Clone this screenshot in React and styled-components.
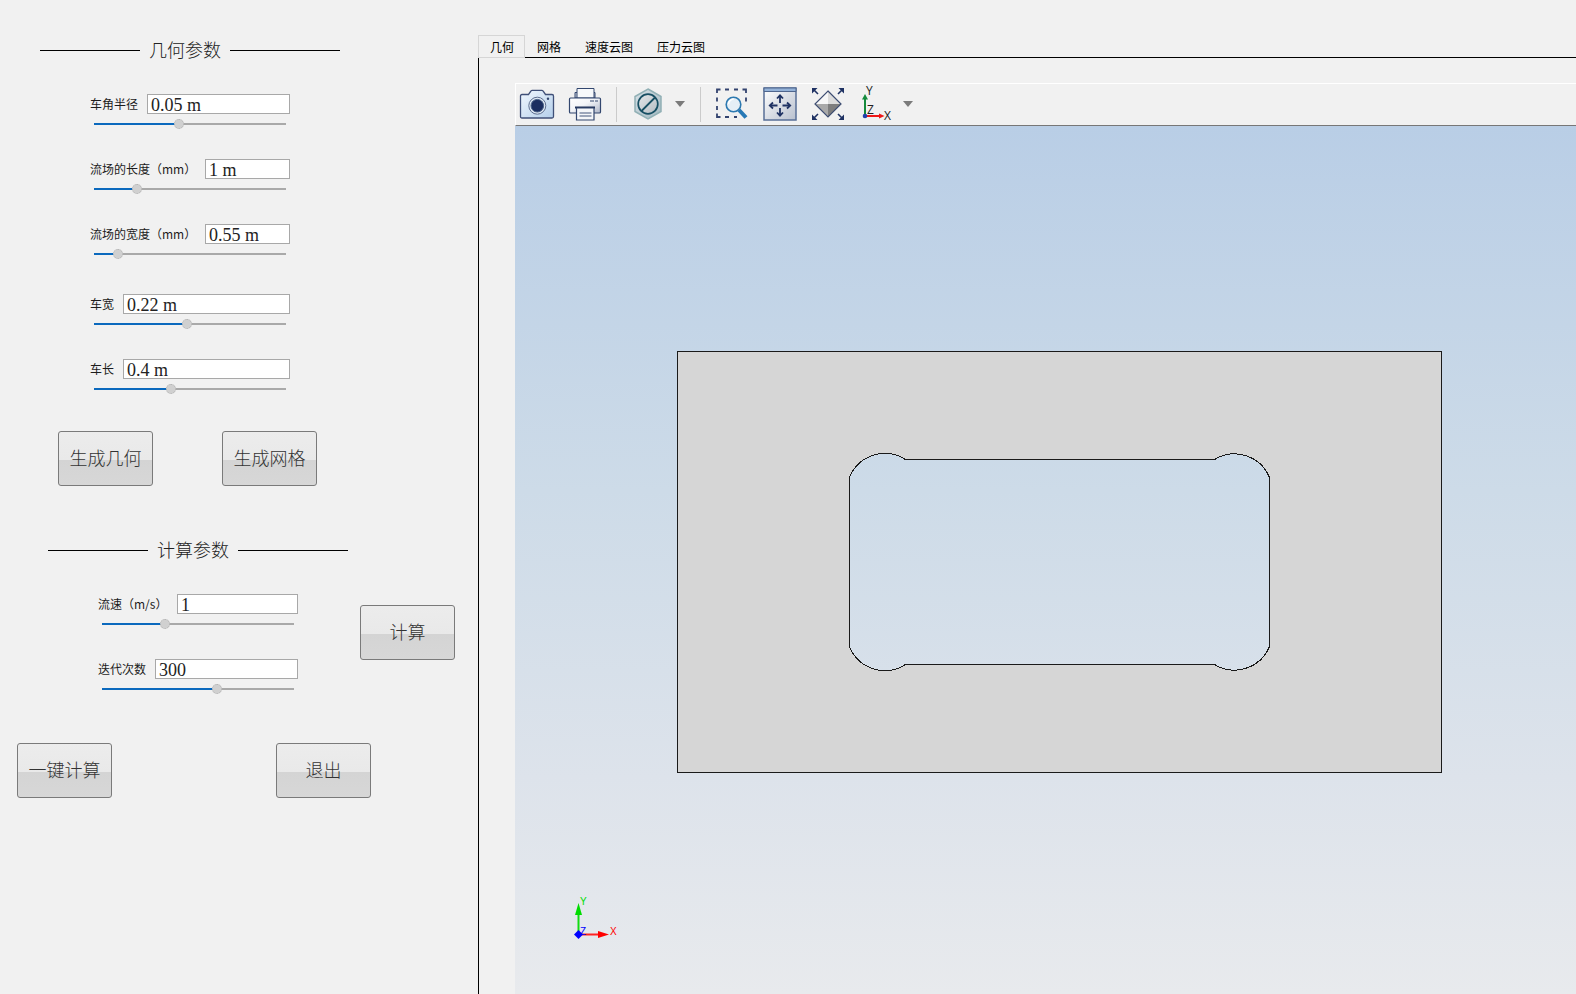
import React, { useId, useState } from "react";
import styled, { createGlobalStyle, css } from "styled-components";

const sans = `"Noto Sans CJK SC", "Noto Sans", sans-serif`;

const GlobalStyle = createGlobalStyle`
  *, *::before, *::after { box-sizing: border-box; }
  body {
    margin: 0;
    background: #f1f1f1;
    color: #1c1c1c;
    font-family: ${sans};
    font-size: 12px;
    line-height: 20px;
  }
`;

const Window = styled.div`
  display: flex;
  min-height: 100vh;
`;

/* ---------- left side: parameters ---------- */

const Sidebar = styled.aside`
  flex: none;
  width: 478px;
  padding-top: 40px;
`;

const SectionTitle = styled.h2`
  display: flex;
  align-items: center;
  gap: 9px;
  width: 300px;
  height: 20px;
  margin: 0 0 34px ${(p) => p.$indent}px;
  font-size: 18px;
  font-weight: 300;
  color: #222;
  white-space: nowrap;

  &::before, &::after {
    content: "";
    height: 1px;
    background: #000;
  }
  &::before { width: 100px; }
  &::after { flex: 1; }
`;

const TitleText = styled.span`
  padding-bottom: 3px;
`;

const Fields = styled.div`
  display: flex;
  flex-direction: column;
  gap: 30px;
  width: 200px;
`;

const GeometryFields = styled.div`
  display: flex;
  flex-direction: column;
  gap: 35px;
  margin-left: 90px;
`;

const Field = styled.div`
  display: flex;
  flex-direction: column;
  gap: 5px;
`;

const FieldRow = styled.div`
  display: flex;
  gap: 9px;
  height: 20px;
`;

const Label = styled.label`
  flex: none;
  width: ${(p) => p.$width}px;
  white-space: nowrap;
`;

const TextBox = styled.input`
  flex: 1;
  min-width: 0;
  height: 20px;
  padding: 2px 3px 0;
  border: 1px solid #a8a8a8;
  border-radius: 0;
  background: #fff;
  color: #222;
  font: 18px/16px "Liberation Serif", "Noto Sans CJK SC", serif;
  outline: none;
`;

const thumb = css`
  width: 10px;
  height: 10px;
  border: 1px dotted #b0b0b0;
  border-radius: 50%;
  background: #d0d0d0;
`;

const Slider = styled.input`
  appearance: none;
  width: 192px;
  height: 10px;
  margin: 0 4px;
  background: linear-gradient(#0b69bd, #0b69bd) 0 4px / ${(p) => p.value}% 2px no-repeat,
    linear-gradient(#a9a9a9, #a9a9a9) 0 4px / 100% 2px no-repeat;

  &::-webkit-slider-thumb { appearance: none; ${thumb} }
  &::-moz-range-thumb { ${thumb} }
`;

const ButtonRow = styled.div`
  display: flex;
  gap: ${(p) => p.$gap}px;
  margin: ${(p) => p.$top}px 0 0 ${(p) => p.$indent}px;
`;

const PushButton = styled.button`
  flex: none;
  width: 95px;
  height: 55px;
  padding: 0 0 3px;
  border: 1px solid #7a7a7a;
  border-radius: 3px;
  background: linear-gradient(#ececec 0, #e9e9e9 28px, #d4d4d4 28px, #d7d7d7 100%);
  color: #333;
  font: 300 18px/24px ${sans};
`;

const ComputeSection = styled.section`
  margin-top: 54px;
`;

const ComputeArea = styled.div`
  display: flex;
  align-items: flex-start;
  gap: 62px;
  margin-left: 98px;

  ${PushButton} { margin-top: 11px; }
`;

/* ---------- right side: tabs and viewer ---------- */

const Workspace = styled.main`
  flex: 1;
  min-width: 0;
  display: flex;
  flex-direction: column;
  padding-top: 35px;
`;

const TabList = styled.div`
  display: flex;
  height: 23px;

  &::after {
    content: "";
    flex: 1;
    border-bottom: 1px solid #000;
  }
`;

const Tab = styled.button`
  padding: 1px 12px 0;
  border: 0;
  border-bottom: 1px solid #000;
  background: none;
  color: #000;
  font: 12px/20px ${sans};
  white-space: nowrap;

  &[aria-selected="true"] {
    padding: 0 10px 0 11px;
    border: 1px solid #d6d6d6;
  }
`;

const TabPanel = styled.div`
  flex: 1;
  display: flex;
  flex-direction: column;
  padding: 25px 0 0 36px;
  border-left: 1px solid #000;
`;

const Toolbar = styled.div`
  display: flex;
  align-items: center;
  gap: 14px;
  height: 43px;
  padding: 0 0 1px 4px;
  border-top: 1px solid #fff;
  border-left: 1px solid #fff;
  border-bottom: 1px solid #777;
`;

const ToolGroup = styled.div`
  display: flex;
  align-items: center;
  gap: 9px;
`;

const ToolButton = styled.button`
  flex: none;
  display: flex;
  align-items: center;
  justify-content: center;
  width: ${(p) => (p.$menu ? 12 : 34)}px;
  height: 34px;
  padding: 0;
  border: 0;
  background: none;

  svg { display: block; flex: none; overflow: visible; }
`;

const Separator = styled.span`
  width: 1px;
  height: 35px;
  background: #cbcbcb;
`;

const Viewport = styled.div`
  flex: 1;
  display: flex;
  min-height: 0;
  background: linear-gradient(#b9cee6, #cddbe8 42%, #dde3eb 75%, #e8eaed);

  svg { display: block; width: 100%; height: auto; }
`;

/* ---------- icons ---------- */

const Icon = ({ children }) => (
  <svg width="34" height="34" viewBox="0 0 34 34" fill="none" aria-hidden="true">{children}</svg>
);

const CameraIcon = () => (
  <Icon>
    <defs>
      <linearGradient id="cam" x1="0" y1="0" x2="1" y2="1">
        <stop offset="0" stopColor="#f2f8fe" /><stop offset="1" stopColor="#b4cfeb" />
      </linearGradient>
    </defs>
    <path d="M2 7.5h6.5l2.5-3.5q.4-.6 1.200-.6h9.600q.8 0 1.200.6l2.500 3.500h6.500q1.500 0 1.500 1.500v20.500q0 1.500-1.500 1.500h-30q-1.500 0-1.500-1.500v-20.500q0-1.500 1.500-1.500z" fill="url(#cam)" stroke="#405078" strokeWidth="1.300" />
    <circle cx="17.300" cy="18.700" r="8.500" fill="#dfe9f4" stroke="#5c6d8e" />
    <circle cx="17.300" cy="18.700" r="6.300" fill="#1b2e60" stroke="#4a6288" />
    <circle cx="28" cy="11.700" r="1.200" fill="#33476f" />
  </Icon>
);

const PrinterIcon = () => (
  <Icon>
    <defs>
      <linearGradient id="prn" x1="0" y1="0" x2="1" y2="1">
        <stop offset="0" stopColor="#fff" /><stop offset=".45" stopColor="#f2f4f8" /><stop offset="1" stopColor="#aeb6c8" />
      </linearGradient>
    </defs>
    <path d="M7 11V5.500h20V11z" fill="#c9cfdb" stroke="#33476f" />
    <path d="M9 11V1.500h17V11z" fill="#f7f9fb" stroke="#33476f" />
    <rect x="1.500" y="11" width="31" height="15" rx="1" fill="url(#prn)" stroke="#33476f" strokeWidth="1.200" />
    <path d="M22 14h4M27 14h3" stroke="#33476f" strokeWidth="1.200" />
    <path d="M7 20.500h20" stroke="#1f3058" strokeWidth="2" />
    <path d="M8.500 21h17.500v12H8.500z" fill="#f4f6f9" stroke="#33476f" strokeWidth="1.200" />
    <path d="M11.500 26h12M11.500 29h12" stroke="#44577d" />
  </Icon>
);

const ClipIcon = () => (
  <Icon>
    <defs>
      <linearGradient id="hex" x1="0" y1="0" x2="1" y2="1">
        <stop offset="0" stopColor="#d8e2e8" /><stop offset="1" stopColor="#a3b8c0" />
      </linearGradient>
      <linearGradient id="disc" x1="0" y1="0" x2="1" y2="1">
        <stop offset="0" stopColor="#e4e8ea" /><stop offset="1" stopColor="#b4bcc2" />
      </linearGradient>
    </defs>
    <path d="M17 2l13 7.500v15L17 32 4 24.500v-15z" fill="url(#hex)" stroke="#91b0b5" strokeWidth="1.500" />
    <circle cx="17" cy="17" r="9.800" fill="url(#disc)" stroke="#174f63" strokeWidth="1.700" />
    <path d="M10.500 24L24 10.500" stroke="#174f63" strokeWidth="1.800" />
  </Icon>
);

const ZoomBoxIcon = () => (
  <Icon>
    <path d="M2 6V2.500h3.500M10 2.500h4M19 2.500h4M27.500 2.500H31V6M31 10.500v4M2 10.500v4M2 19v4M2 26.500V30h3.500M10 30h4M19 30h3" stroke="#33436f" strokeWidth="1.800" />
    <path d="M24 23l7 7.500" stroke="#2779b6" strokeWidth="4" />
    <circle cx="18.500" cy="17.500" r="7.300" fill="#e6eff6" stroke="#2d79b0" strokeWidth="1.600" />
    <path d="M13.500 17q.5-4 5-5" stroke="#fff" strokeWidth="1.500" />
  </Icon>
);

const FitIcon = () => (
  <Icon>
    <defs>
      <linearGradient id="fit" x1="0" y1="0" x2="1" y2="1">
        <stop offset="0" stopColor="#fff" /><stop offset="1" stopColor="#b8c0ce" />
      </linearGradient>
    </defs>
    <rect x="1" y="1" width="32" height="32" fill="url(#fit)" stroke="#586f97" strokeWidth="1.500" />
    <path d="M1 1h32v3.500H1z" fill="#94b2d8" stroke="#4f668e" />
    <g stroke="#1f3263" strokeWidth="1.800">
      <path d="M17 16V9M17 21v7M14.500 18.500h-7M19.500 18.500h7" />
      <path d="M14 11.500l3-3.200 3 3.200M14 25.500l3 3.200 3-3.200M10 15.500l-3.200 3 3.200 3M24 15.500l3.200 3-3.200 3" />
    </g>
  </Icon>
);

const RotateIcon = () => (
  <Icon>
    <path d="M17 4L4 17h13z" fill="#f7f7f7" />
    <path d="M17 4V17h13z" fill="#dcdcdc" />
    <path d="M4 17h13v13z" fill="#a9a9a9" />
    <path d="M17 17h13L17 30z" fill="#7e7e7e" />
    <path d="M17 4L30 17 17 30 4 17z" stroke="#3d4d72" strokeWidth="1.200" />
    <path d="M1 1h5.500L1 6.500zM33 1h-5.500L33 6.500zM1 33h5.500L1 27.500zM33 33h-5.500L33 27.500z" fill="#1f3263" />
    <path d="M3 3l4 4M31 3l-4 4M3 31l4-4M31 31l-4-4" stroke="#1f3263" strokeWidth="1.600" />
  </Icon>
);

const AxesIcon = () => (
  <Icon>
    <path d="M6 29V11" stroke="#158a3c" strokeWidth="2" />
    <path d="M6 7l3 5.500H3z" fill="#158a3c" />
    <path d="M6 29h15" stroke="#f01818" strokeWidth="2" />
    <path d="M25.500 29L20 26.500v5z" fill="#f01818" />
    <circle cx="6" cy="29" r="2.300" fill="#2341ad" />
    <g fill="#222" fontFamily="Open Sans, sans-serif" fontSize="12">
      <text x="7" y="8">Y</text>
      <text x="8" y="27">Z</text>
      <text x="25" y="33">X</text>
    </g>
  </Icon>
);

const CaretIcon = () => (
  <svg width="10" height="6" viewBox="0 0 10 6" aria-hidden="true">
    <path d="M0 0h10L5 6z" fill="#7b7b7b" />
  </svg>
);

const GeometryDrawing = () => (
  <svg viewBox="0 0 1061 868" preserveAspectRatio="xMidYMid meet" role="img" aria-label="几何">
    <g fill="#d6d6d6" stroke="#1a1a1a" shapeRendering="crispEdges">
      <path
        fillRule="evenodd"
        d="M162.500 225.500h764v421h-764z
           M390.500 333.500H699.500A38 38 0 0 1 754.500 351.500V520.500A38 38 0 0 1 699.500 538.500H390.500A38 38 0 0 1 334.500 520.500V351.500A38 38 0 0 1 390.500 333.500z"
      />
    </g>
    <path d="M63.500 808V786" stroke="#12dc12" strokeWidth="2" />
    <path d="M63.500 777l3.500 12h-7z" fill="#00dc00" />
    <path d="M64 808.500h22" stroke="#f22" strokeWidth="2" />
    <path d="M94 808.500l-11-3.500v7z" fill="#f00" />
    <path d="M63.500 804l4.500 4.500-4.500 4.500-4.500-4.500z" fill="#00f" />
    <g fontFamily="Liberation Sans, sans-serif" fontSize="10">
      <text x="65" y="779" fill="#00dc00">Y</text>
      <text x="65" y="809" fill="#00f">Z</text>
      <text x="95" y="809" fill="#f00">X</text>
    </g>
  </svg>
);

/* ---------- composition ---------- */

const ParameterField = ({ label, labelWidth, text, level }) => {
  const id = useId();
  const [value, setValue] = useState(level);
  return (
    <Field>
      <FieldRow>
        <Label htmlFor={id} $width={labelWidth}>{label}</Label>
        <TextBox id={id} type="text" defaultValue={text} />
      </FieldRow>
      <Slider
        type="range" min="0" max="100" step="0.5" aria-label={label}
        value={value} onChange={(e) => setValue(Number(e.target.value))}
      />
    </Field>
  );
};

const tabs = ["几何", "网格", "速度云图", "压力云图"];

export default function App() {
  const [active, setActive] = useState(tabs[0]);
  return (
    <>
      <GlobalStyle />
      <Window>
        <Sidebar>
          <section>
            <SectionTitle $indent={40}><TitleText>几何参数</TitleText></SectionTitle>
            <GeometryFields>
              <Fields>
                <ParameterField label="车角半径" labelWidth={48} text="0.05 m" level={44} />
                <ParameterField label="流场的长度（mm）" labelWidth={106} text="1 m" level={21} />
                <ParameterField label="流场的宽度（mm）" labelWidth={106} text="0.55 m" level={10.5} />
              </Fields>
              <Fields>
                <ParameterField label="车宽" labelWidth={24} text="0.22 m" level={48.5} />
                <ParameterField label="车长" labelWidth={24} text="0.4 m" level={39.5} />
              </Fields>
            </GeometryFields>
            <ButtonRow $top={37} $indent={58} $gap={69}>
              <PushButton type="button">生成几何</PushButton>
              <PushButton type="button">生成网格</PushButton>
            </ButtonRow>
          </section>

          <ComputeSection>
            <SectionTitle $indent={48}><TitleText>计算参数</TitleText></SectionTitle>
            <ComputeArea>
              <Fields>
                <ParameterField label="流速（m/s）" labelWidth={70} text="1" level={32} />
                <ParameterField label="迭代次数" labelWidth={48} text="300" level={60.5} />
              </Fields>
              <PushButton type="button">计算</PushButton>
            </ComputeArea>
            <ButtonRow $top={49} $indent={17} $gap={164}>
              <PushButton type="button">一键计算</PushButton>
              <PushButton type="button">退出</PushButton>
            </ButtonRow>
          </ComputeSection>
        </Sidebar>

        <Workspace>
          <TabList role="tablist">
            {tabs.map((name) => (
              <Tab key={name} type="button" role="tab" aria-selected={name === active} onClick={() => setActive(name)}>
                {name}
              </Tab>
            ))}
          </TabList>
          <TabPanel role="tabpanel">
            <Toolbar role="toolbar">
              <ToolButton type="button" aria-label="Snapshot"><CameraIcon /></ToolButton>
              <ToolButton type="button" aria-label="Print"><PrinterIcon /></ToolButton>
              <Separator />
              <ToolGroup>
                <ToolButton type="button" aria-label="Clipping"><ClipIcon /></ToolButton>
                <ToolButton type="button" aria-label="Clipping options" $menu><CaretIcon /></ToolButton>
              </ToolGroup>
              <Separator />
              <ToolButton type="button" aria-label="Zoom box"><ZoomBoxIcon /></ToolButton>
              <ToolButton type="button" aria-label="Zoom to extents"><FitIcon /></ToolButton>
              <ToolButton type="button" aria-label="Default view"><RotateIcon /></ToolButton>
              <ToolGroup>
                <ToolButton type="button" aria-label="Axis view"><AxesIcon /></ToolButton>
                <ToolButton type="button" aria-label="Axis view options" $menu><CaretIcon /></ToolButton>
              </ToolGroup>
            </Toolbar>
            <Viewport>
              <GeometryDrawing />
            </Viewport>
          </TabPanel>
        </Workspace>
      </Window>
    </>
  );
}
